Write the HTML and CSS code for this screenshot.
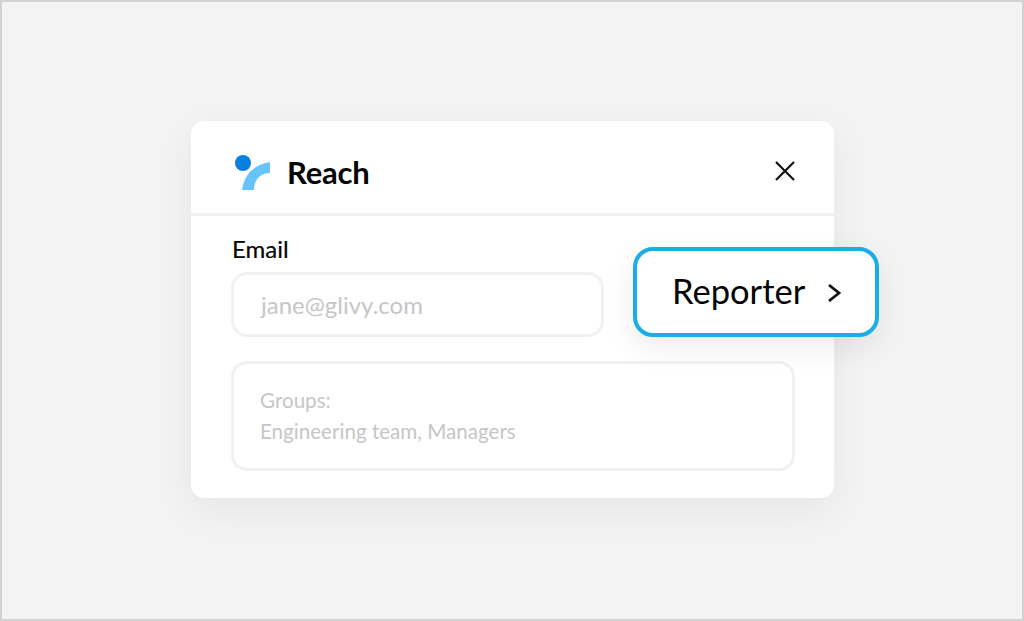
FILE: index.html
```html
<!DOCTYPE html>
<html lang="en">
<head>
<meta charset="utf-8">
<title>Reach</title>
<link rel="stylesheet" href="styles.css">
</head>
<body>
<main class="frame">
  <section class="card">
    <header class="card-head">
      <div class="brand">
        <svg class="logo" width="36" height="36" viewBox="0 0 36 36" aria-hidden="true">
          <path class="logo-arc" d="M7 35 C9 22 16 10 35 7 V18 C25 18 19 25 19 35 Z"/>
          <circle class="logo-dot" cx="8" cy="8" r="8"/>
        </svg>
        <span class="brand-name">Reach</span>
      </div>
      <svg class="close" width="22" height="22" viewBox="0 0 22 22" aria-hidden="true">
        <path d="M2 2 L20 20 M20 2 L2 20"/>
      </svg>
    </header>
    <div class="card-body">
      <label class="field-label">Email</label>
      <div class="input">jane@glivy.com</div>
      <div class="groups">
        <p>Groups:</p>
        <p>Engineering team, Managers</p>
      </div>
    </div>
    <button class="role" type="button">
      <span>Reporter</span>
      <svg class="chevron" width="16" height="20" viewBox="0 0 16 20" aria-hidden="true">
        <path d="M3 2 L13 10 L3 18"/>
      </svg>
    </button>
  </section>
</main>
</body>
</html>
```
FILE: styles.css
```css
* { box-sizing: border-box; }
html, body { margin: 0; height: 100%; }
body { font-family: Lato, "Noto Sans", sans-serif; background: #f3f3f3; }
.frame {
  width: 1024px;
  height: 621px;
  border: 2px solid #d2d2d2;
  background: #f3f3f3;
  display: flex;
  align-items: flex-start;
  justify-content: flex-start;
  padding: 119px 0 0 189px;
}
.card {
  position: relative;
  width: 643px;
  height: 377px;
  background: #fff;
  border-radius: 13px;
  box-shadow: 0 12px 40px rgba(0, 0, 0, 0.06);
}
.card-head {
  height: 95px;
  border-bottom: 3px solid #f1f1f1;
  display: flex;
  align-items: flex-start;
  justify-content: space-between;
  padding: 34px 38px 0 44px;
}
.brand { display: flex; align-items: flex-start; gap: 16px; }
.logo { display: block; }
.logo-arc { fill: #66c4fb; }
.logo-dot { fill: #0a7fe0; }
.brand-name { font-size: 31px; font-weight: 700; color: #050505; letter-spacing: -0.2px; line-height: 36px; margin-top: -1px; }
.close { display: block; margin-top: 5px; }
.close path { fill: none; stroke: #111; stroke-width: 2.2; }
.card-body { padding: 20px 40px 0 40px; }
.field-label { display: block; font-size: 24px; line-height: 26px; color: #050505; -webkit-text-stroke: 0.2px #050505; margin-left: 1px; }
.input {
  width: 373px;
  height: 65px;
  margin-top: 10px;
  border: 3px solid #f1f1f1;
  border-radius: 16px;
  display: flex;
  align-items: center;
  padding-left: 27px;
  font-size: 24px;
  color: #c6c6c6;
}
.groups {
  width: 564px;
  height: 110px;
  margin-top: 24px;
  border: 3px solid #f1f1f1;
  border-radius: 16px;
  padding: 21px 26px;
  font-size: 20.6px;
  line-height: 31px;
  color: #c6c6c6;
}
.groups p { margin: 0; }
.role {
  position: absolute;
  left: 442px;
  top: 126px;
  width: 246px;
  height: 90px;
  border: 4px solid #1aaee5;
  border-radius: 20px;
  background: #fff;
  box-shadow: 0 10px 30px rgba(0, 0, 0, 0.08);
  font: 400 34.5px Lato, sans-serif;
  color: #050505;
  display: flex;
  align-items: center;
  padding: 0 0 4px 35px;
  gap: 21px;
}
.chevron { display: block; margin-top: 6px; }
.chevron path { fill: none; stroke: #111; stroke-width: 2.8; }
```
